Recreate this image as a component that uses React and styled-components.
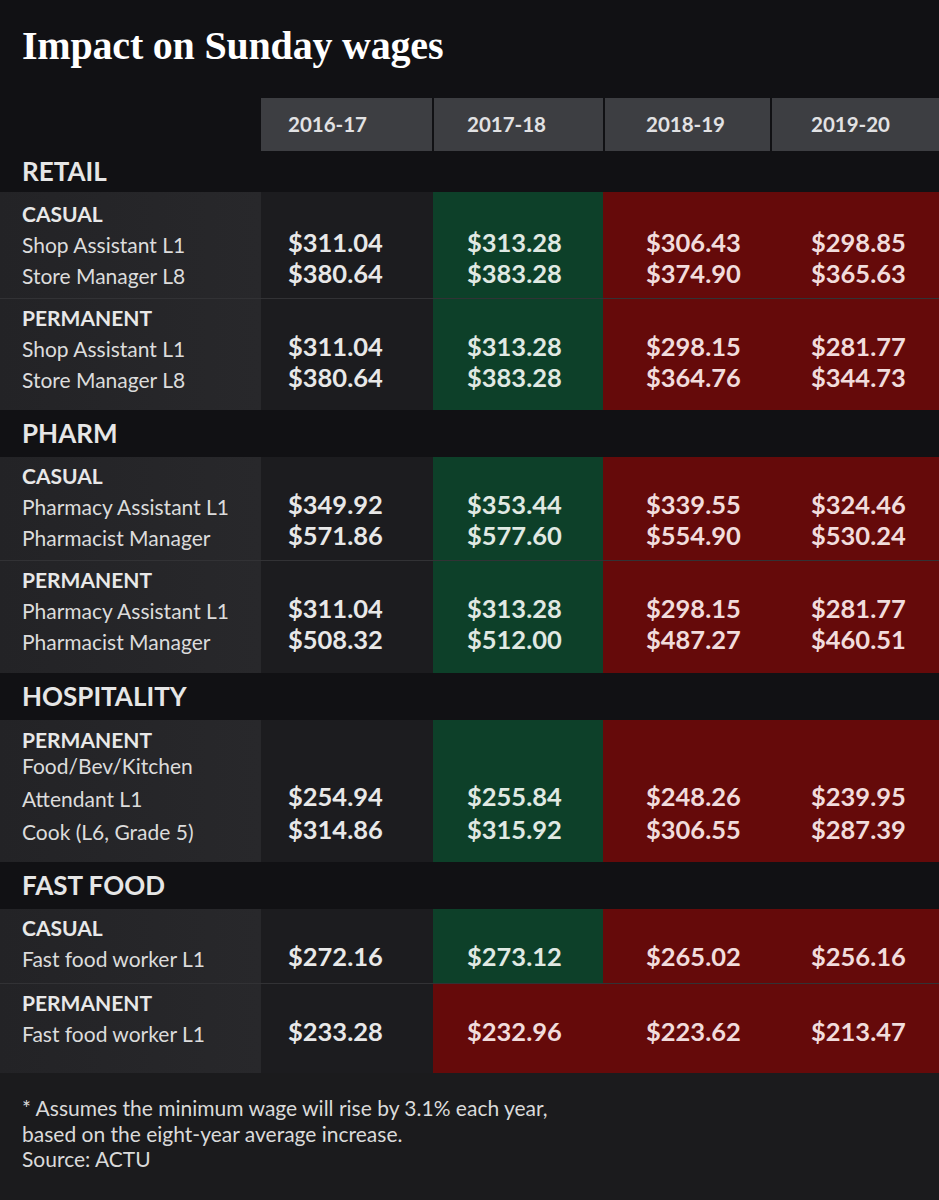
import React from 'react';
import styled, { createGlobalStyle } from 'styled-components';

const GlobalStyle = createGlobalStyle`
  html, body {
    margin: 0;
    padding: 0;
    background: #111114;
  }
  * {
    box-sizing: border-box;
  }
`;

const COLS = '261px 172px 170px 169px 167px';
const VALUE_PAD = [27, 34, 43, 39];
const HEAD_PAD = [27, 33, 41, 39];

const TONES = {
  base: '#1c1c1f',
  up: '#0d4029',
  down: '#650a0a',
};

const Page = styled.div`
  width: 939px;
  min-height: 1200px;
  display: flex;
  flex-direction: column;
  background: #111114;
  font-family: Lato, 'Open Sans', sans-serif;
  color: #e4e4e4;
`;

const Title = styled.h1`
  margin: 0;
  padding: 26px 22px 0;
  font-family: 'Liberation Serif', 'DejaVu Serif', serif;
  font-weight: 700;
  font-size: 40px;
  line-height: 40px;
  letter-spacing: -0.2px;
  color: #ffffff;
`;

const HeaderRow = styled.div`
  display: flex;
  gap: 2px;
  margin-top: 32px;
  height: 53px;
`;

const HeaderSpacer = styled.div`
  width: 259px;
`;

const HeaderCell = styled.div`
  width: ${p => p.$w}px;
  padding-left: ${p => p.$pad}px;
  background: #3d3e42;
  font-size: 20.5px;
  font-weight: 700;
  line-height: 53px;
  color: #e2e2e4;
`;

const SectionTitle = styled.div`
  height: ${p => (p.$first ? 41 : 47)}px;
  padding-left: 22px;
  font-size: 26px;
  font-weight: 700;
  line-height: ${p => (p.$first ? 41 : 47)}px;
  color: #e6e6e6;
  background: #111114;
`;

const Group = styled.div`
  display: grid;
  grid-template-columns: ${COLS};
  height: ${p => p.$h}px;
  border-top: ${p => (p.$sep ? '1px solid rgba(255, 255, 255, 0.14)' : 'none')};
`;

const LabelCell = styled.div`
  padding: ${p => p.$pad}px 0 0 22px;
  background: linear-gradient(to right, #232326, #28282b);
`;

const Kind = styled.div`
  font-size: 21px;
  font-weight: 700;
  line-height: ${p => p.$lh}px;
  color: #e8e8e8;
`;

const RowLabel = styled.div`
  font-size: 21px;
  font-weight: 400;
  line-height: ${p => p.$lh}px;
  color: #dcdcdc;
`;

const ValueCell = styled.div`
  display: flex;
  flex-direction: column;
  padding: ${p => p.$pad}px 0 0 ${p => p.$left}px;
  background: ${p => TONES[p.$tone]};
`;

const Spacer = styled.div`
  height: ${p => p.$h}px;
`;

const ValueLine = styled.div`
  display: flex;
  align-items: flex-end;
  height: ${p => p.$h}px;
  font-size: 25.5px;
  font-weight: 700;
  line-height: ${p => p.$lh}px;
  color: ${p => (p.$tone === 'down' ? '#f1dcdc' : p.$tone === 'up' ? '#e0e9e3' : '#e8e8e8')};
`;

const Footer = styled.div`
  flex: 1;
  padding: 22px 22px 0;
  background: #1b1b1d;
  font-size: 21px;
  line-height: 25.5px;
  color: #dadada;
`;

const years = ['2016-17', '2017-18', '2018-19', '2019-20'];
const headWidths = [171, 169, 165, 167];

const sections = [
  {
    title: 'RETAIL',
    first: true,
    groups: [
      {
        kind: 'CASUAL', height: 106, pad: 6,
        rows: [
          { label: ['Shop Assistant L1'], values: ['$311.04', '$313.28', '$306.43', '$298.85'] },
          { label: ['Store Manager L8'], values: ['$380.64', '$383.28', '$374.90', '$365.63'] },
        ],
      },
      {
        kind: 'PERMANENT', height: 112,
        rows: [
          { label: ['Shop Assistant L1'], values: ['$311.04', '$313.28', '$298.15', '$281.77'] },
          { label: ['Store Manager L8'], values: ['$380.64', '$383.28', '$364.76', '$344.73'] },
        ],
      },
    ],
  },
  {
    title: 'PHARM',
    groups: [
      {
        kind: 'CASUAL', height: 103,
        rows: [
          { label: ['Pharmacy Assistant L1'], values: ['$349.92', '$353.44', '$339.55', '$324.46'] },
          { label: ['Pharmacist Manager'], values: ['$571.86', '$577.60', '$554.90', '$530.24'] },
        ],
      },
      {
        kind: 'PERMANENT', height: 113,
        rows: [
          { label: ['Pharmacy Assistant L1'], values: ['$311.04', '$313.28', '$298.15', '$281.77'] },
          { label: ['Pharmacist Manager'], values: ['$508.32', '$512.00', '$487.27', '$460.51'] },
        ],
      },
    ],
  },
  {
    title: 'HOSPITALITY',
    groups: [
      {
        kind: 'PERMANENT', height: 142, pad: 11, lh: 33, kindLh: 18,
        rows: [
          { label: ['Food/Bev/Kitchen', 'Attendant L1'], values: ['$254.94', '$255.84', '$248.26', '$239.95'] },
          { label: ['Cook (L6, Grade 5)'], values: ['$314.86', '$315.92', '$306.55', '$287.39'] },
        ],
      },
    ],
  },
  {
    title: 'FAST FOOD',
    groups: [
      {
        kind: 'CASUAL', height: 74,
        rows: [
          { label: ['Fast food worker L1'], values: ['$272.16', '$273.12', '$265.02', '$256.16'] },
        ],
      },
      {
        kind: 'PERMANENT', height: 90,
        rows: [
          { label: ['Fast food worker L1'], values: ['$233.28', '$232.96', '$223.62', '$213.47'] },
        ],
      },
    ],
  },
];

const toNum = v => parseFloat(v.replace('$', ''));

// colour of each year column: first is neutral, others compare with the year before
const toneFor = (group, col) => {
  if (col === 0) return 'base';
  const first = group.rows[0].values;
  return toNum(first[col]) < toNum(first[col - 1]) ? 'down' : 'up';
};

const WageGroup = ({ group, separated }) => {
  const lh = group.lh || 31;
  const kindLh = group.kindLh || 31;
  const pad = group.pad ?? 3;

  return (
    <Group $h={group.height} $sep={separated}>
      <LabelCell $pad={pad}>
        <Kind $lh={kindLh}>{group.kind}</Kind>
        {group.rows.map((row, i) => (
          <RowLabel key={i} $lh={lh}>
            {row.label.map((line, j) => (
              <div key={j}>{line}</div>
            ))}
          </RowLabel>
        ))}
      </LabelCell>
      {years.map((year, col) => {
        const tone = toneFor(group, col);
        return (
          <ValueCell key={year} $pad={pad} $left={VALUE_PAD[col]} $tone={tone}>
            <Spacer $h={kindLh - 2} />
            {group.rows.map((row, i) => (
              <ValueLine key={i} $h={row.label.length * lh} $lh={lh} $tone={tone}>
                {row.values[col]}
              </ValueLine>
            ))}
          </ValueCell>
        );
      })}
    </Group>
  );
};

const App = () => {
  return (
    <Page>
      <GlobalStyle />
      <Title>Impact on Sunday wages</Title>

      <HeaderRow>
        <HeaderSpacer />
        {years.map((year, i) => (
          <HeaderCell key={year} $w={headWidths[i]} $pad={HEAD_PAD[i]}>
            {year}
          </HeaderCell>
        ))}
      </HeaderRow>

      {sections.map(section => (
        <React.Fragment key={section.title}>
          <SectionTitle $first={section.first}>{section.title}</SectionTitle>
          {section.groups.map((group, i) => (
            <WageGroup key={group.kind} group={group} separated={i > 0} />
          ))}
        </React.Fragment>
      ))}

      <Footer>
        * Assumes the minimum wage will rise by 3.1% each year,
        <br />
        based on the eight-year average increase.
        <br />
        Source: ACTU
      </Footer>
    </Page>
  );
};

export default App;
